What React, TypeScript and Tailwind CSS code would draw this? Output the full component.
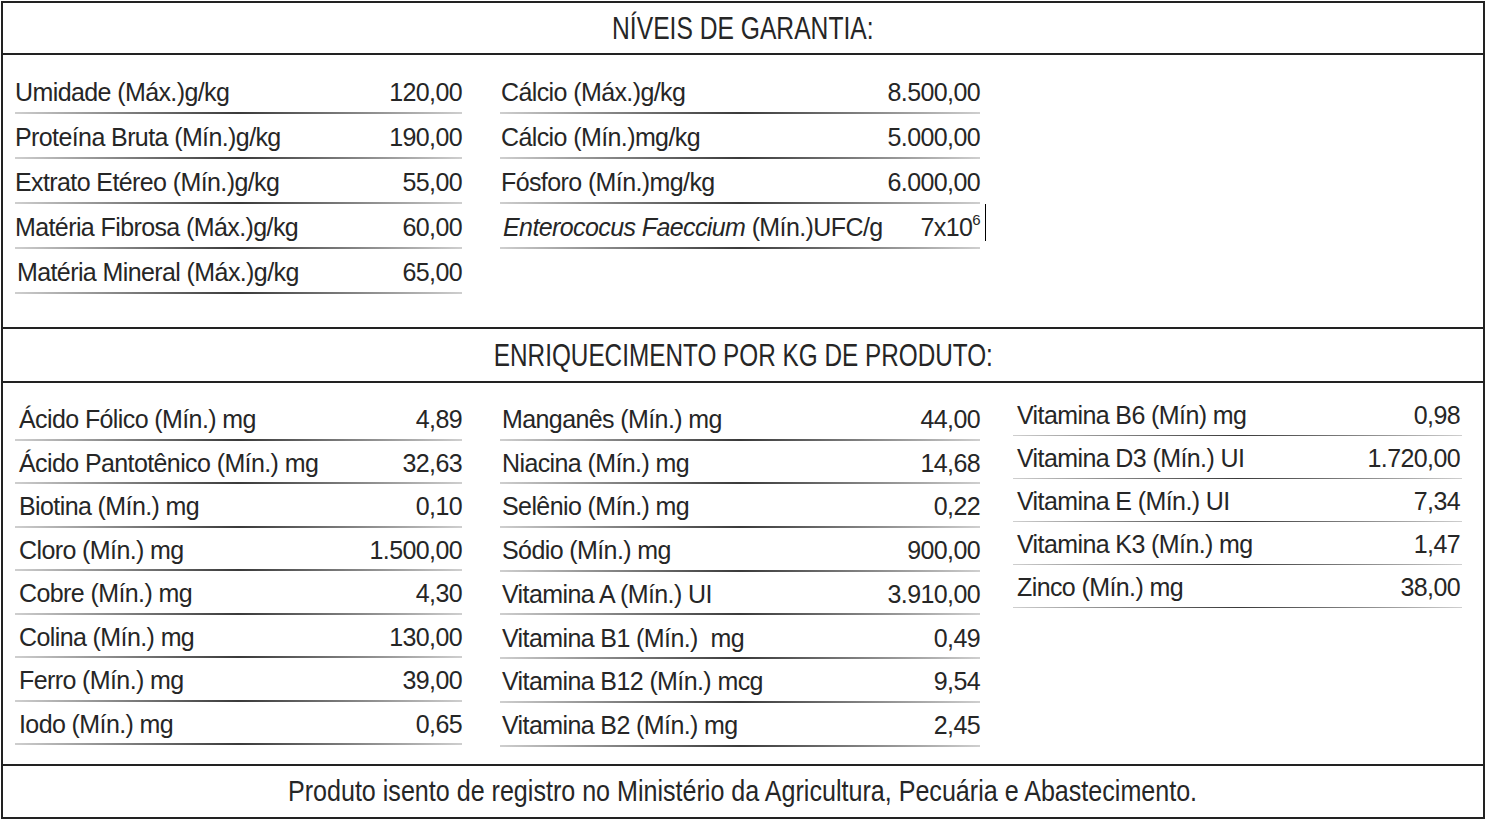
import React from "react";

type Item = { label: React.ReactNode; value: React.ReactNode; extra?: boolean; indent?: boolean };

const garantia1: Item[] = [
  { label: "Umidade (Máx.)g/kg", value: "120,00" },
  { label: "Proteína Bruta (Mín.)g/kg", value: "190,00" },
  { label: "Extrato Etéreo (Mín.)g/kg", value: "55,00" },
  { label: "Matéria Fibrosa (Máx.)g/kg", value: "60,00" },
  { label: "Matéria Mineral (Máx.)g/kg", value: "65,00", indent: true },
];

const garantia2: Item[] = [
  { label: "Cálcio (Máx.)g/kg", value: "8.500,00" },
  { label: "Cálcio (Mín.)mg/kg", value: "5.000,00" },
  { label: "Fósforo (Mín.)mg/kg", value: "6.000,00" },
  {
    label: (
      <>
        <i>Enterococus Faeccium</i> (Mín.)UFC/g
      </>
    ),
    value: (
      <>
        7x10<span className="relative -top-[11px] text-[15px]">6</span>
      </>
    ),
    extra: true,
    indent: true,
  },
];

const enr1: Item[] = [
  { label: "Ácido Fólico (Mín.) mg", value: "4,89" },
  { label: "Ácido Pantotênico (Mín.) mg", value: "32,63" },
  { label: "Biotina (Mín.) mg", value: "0,10" },
  { label: "Cloro (Mín.) mg", value: "1.500,00" },
  { label: "Cobre (Mín.) mg", value: "4,30" },
  { label: "Colina (Mín.) mg", value: "130,00" },
  { label: "Ferro (Mín.) mg", value: "39,00" },
  { label: "Iodo (Mín.) mg", value: "0,65" },
];

const enr2: Item[] = [
  { label: "Manganês (Mín.) mg", value: "44,00" },
  { label: "Niacina (Mín.) mg", value: "14,68" },
  { label: "Selênio (Mín.) mg", value: "0,22" },
  { label: "Sódio (Mín.) mg", value: "900,00" },
  { label: "Vitamina A (Mín.) UI", value: "3.910,00" },
  { label: "Vitamina B1 (Mín.)  mg", value: "0,49" },
  { label: "Vitamina B12 (Mín.) mcg", value: "9,54" },
  { label: "Vitamina B2 (Mín.) mg", value: "2,45" },
];

const enr3: Item[] = [
  { label: "Vitamina B6 (Mín) mg", value: "0,98" },
  { label: "Vitamina D3 (Mín.) UI", value: "1.720,00" },
  { label: "Vitamina E (Mín.) UI", value: "7,34" },
  { label: "Vitamina K3 (Mín.) mg", value: "1,47" },
  { label: "Zinco (Mín.) mg", value: "38,00" },
];

function Line() {
  return <div className="h-[2px] bg-linear-to-r from-[#cfcfcf] via-[#3a3a3a] to-[#cfcfcf]" />;
}

function Row({ item, h, pl, pr }: { item: Item; h: string; pl: string; pr: string }) {
  return (
    <div className={`relative flex flex-col ${h}`}>
      <div className={`flex flex-1 items-center justify-between pt-[4px] ${pl} ${pr}`}>
        <span className={`whitespace-pre ${item.indent ? "pl-[2px]" : ""}`}>{item.label}</span>
        <span className="whitespace-pre">{item.value}</span>
      </div>
      <Line />
      {item.extra && <div className="absolute right-[-6px] top-0 h-[37px] w-px bg-black" />}
    </div>
  );
}

export default function App() {
  return (
    <div className="h-[821px] w-[1486px] bg-white p-[1px] font-['Liberation_Sans',Arial,sans-serif] text-[#262626]">
      <div className="flex h-[818px] w-[1484px] flex-col border-2 border-[#222]">
        {/* Header 1 */}
        <div className="flex h-[52px] items-center justify-center border-b-2 border-[#222]">
          <span className="inline-block scale-x-[0.77] whitespace-nowrap text-[32px] leading-none">
            NÍVEIS DE GARANTIA:
          </span>
        </div>

        {/* Section 1 */}
        <div className="flex h-[274px] gap-[38px] border-b-2 border-[#222] pl-[12px] pt-[14px] text-[25px] tracking-[-0.6px]">
          <div className="w-[447px]">
            {garantia1.map((it, i) => (
              <Row key={i} item={it} h="h-[45px]" pl="pl-0" pr="pr-0" />
            ))}
          </div>
          <div className="w-[480px]">
            {garantia2.map((it, i) => (
              <Row key={i} item={it} h="h-[45px]" pl="pl-[1px]" pr="pr-0" />
            ))}
          </div>
        </div>

        {/* Header 2 */}
        <div className="flex h-[54px] items-center justify-center border-b-2 border-[#222]">
          <span className="inline-block scale-x-[0.76] whitespace-nowrap text-[32px] leading-none">
            ENRIQUECIMENTO POR KG DE PRODUTO:
          </span>
        </div>

        {/* Section 2 */}
        <div className="flex h-[383px] gap-[38px] border-b-2 border-[#222] pl-[12px] text-[25px] tracking-[-0.6px]">
          <div className="w-[447px] pt-[14px]">
            {enr1.map((it, i) => (
              <Row key={i} item={it} h="h-[43.5px]" pl="pl-[4px]" pr="pr-0" />
            ))}
          </div>
          <div className="w-[480px] pt-[14px]">
            {enr2.map((it, i) => (
              <Row key={i} item={it} h="h-[43.7px]" pl="pl-[2px]" pr="pr-0" />
            ))}
          </div>
          <div className="-ml-[5px] w-[449px] pt-[10px]">
            {enr3.map((it, i) => (
              <Row key={i} item={it} h="h-[43px]" pl="pl-[4px]" pr="pr-[2px]" />
            ))}
          </div>
        </div>

        {/* Footer */}
        <div className="flex flex-1 items-center justify-center">
          <span className="inline-block scale-x-[0.865] whitespace-nowrap text-[29px] leading-none">
            Produto isento de registro no Ministério da Agricultura, Pecuária e Abastecimento.
          </span>
        </div>
      </div>
    </div>
  );
}
